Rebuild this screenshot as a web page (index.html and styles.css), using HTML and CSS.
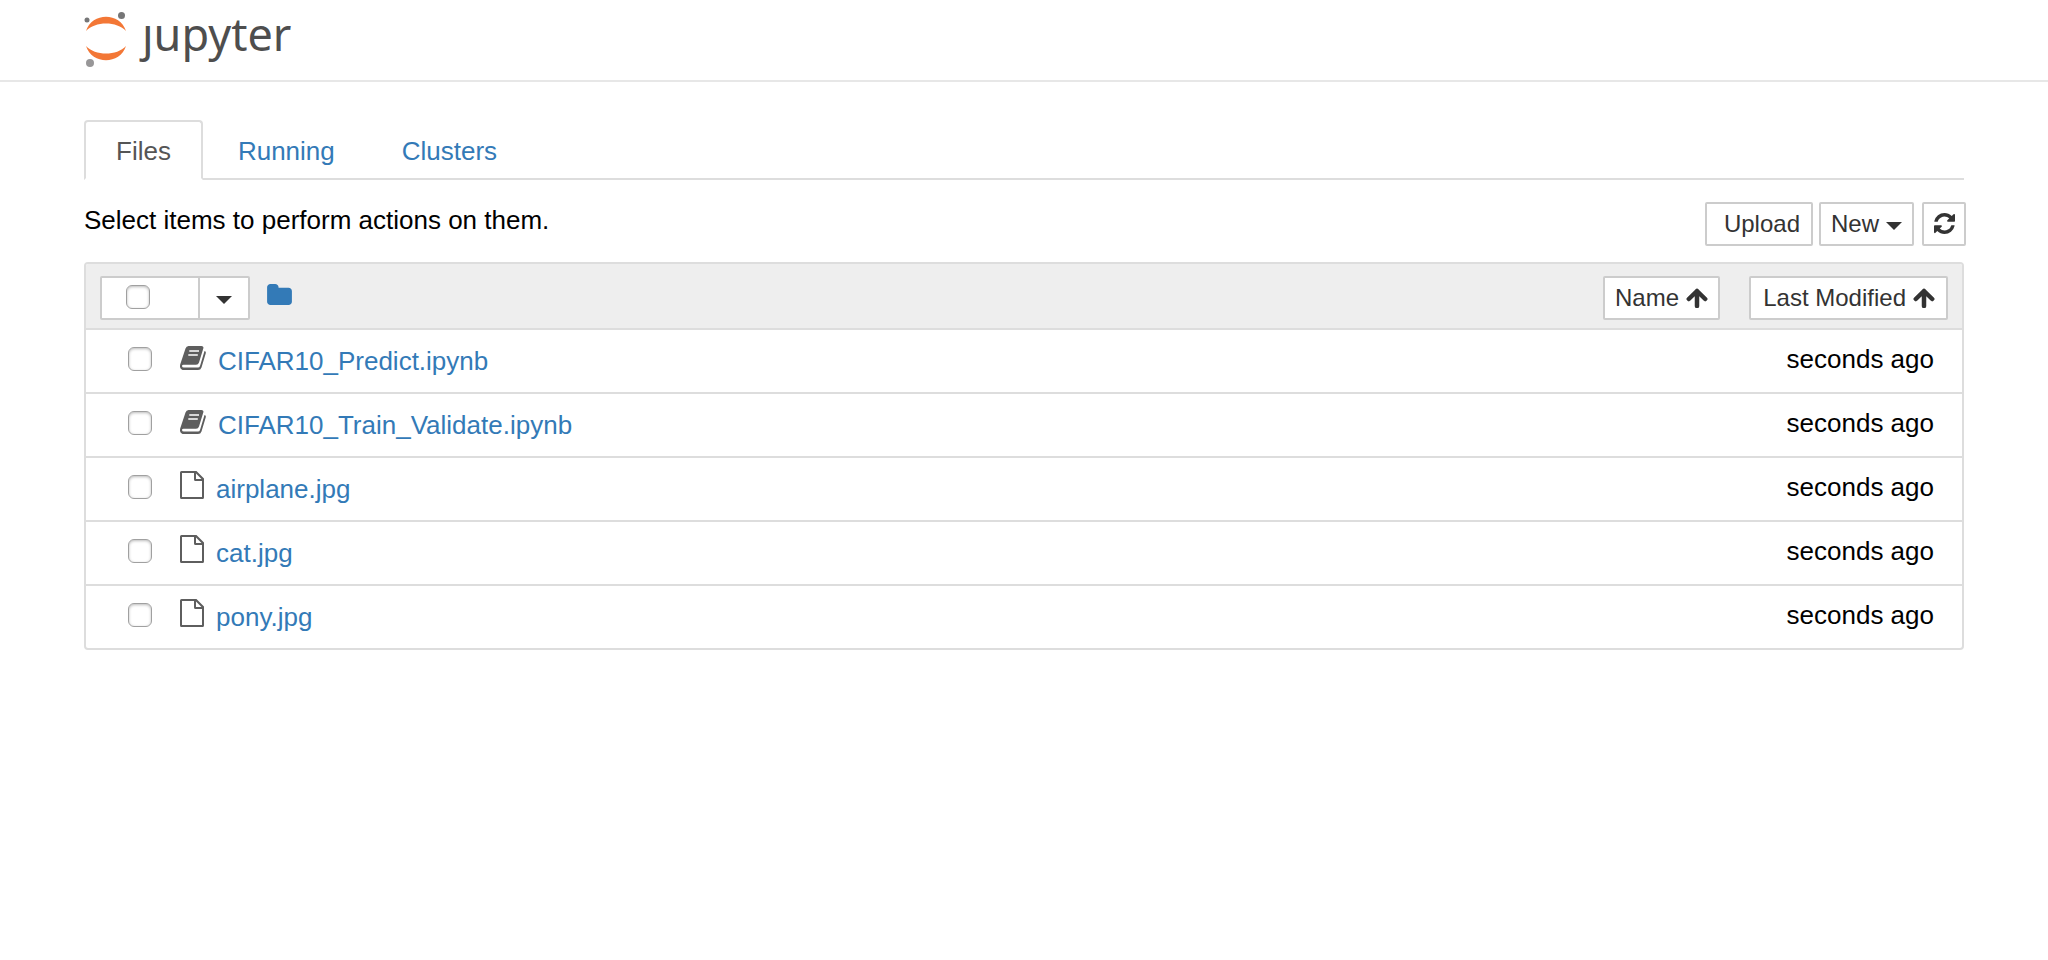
FILE: index.html
```html
<!DOCTYPE html>
<html lang="en">
<head>
  <meta charset="UTF-8">
  <meta name="viewport" content="width=device-width, initial-scale=1.0">
  <title>Home</title>
  <link rel="stylesheet" href="styles.css">
</head>
<body>
  <!-- icons used more than once -->
  <svg class="sprite" aria-hidden="true">
    <symbol id="icon-book" viewBox="0 0 26 24">
      <path d="M8.500 0H21.500Q24 0 23.300 2.500L19 16.500Q18.300 18.800 16 18.800H3.500Q2 18.800 2 20Q2 21.500 4 21.500H18Q19.500 21.500 20 20L24.500 5Q26.300 5.500 25.700 7.500L21.500 21.500Q20.700 24 18 24H4Q0.800 24 0.100 21.200Q-0.200 19.500 0.500 17.500L5.500 2.500Q6.300 0 8.500 0Z"/>
      <path d="M9.300 5H19M8.300 9H17.800" stroke="#fff" stroke-width="1.500"/>
    </symbol>
    <symbol id="icon-file" viewBox="0 0 24 28">
      <path fill-rule="evenodd" d="M1.500 0H16.500L24 7.500V26.500Q24 28 22.500 28H1.500Q0 28 0 26.500V1.500Q0 0 1.500 0ZM2 2V26H22V10H15.500Q14 10 14 8.500V2ZM16 2.500V8H21.500Z"/>
    </symbol>
    <symbol id="icon-arrow-up" viewBox="0 0 22 20">
      <path d="M11 3V18M2.800 11L11 3L19.200 11" fill="none" stroke="currentColor" stroke-width="4.500" stroke-linecap="round" stroke-linejoin="round"/>
    </symbol>
  </svg>

  <header class="header">
    <div class="container">
      <a class="logo" href="#">
        <svg class="logo-mark" viewBox="0 0 44 56" aria-hidden="true">
          <path fill="#f37736" d="M2 19C8 0 36 0 42 19C33 9 11 9 2 19Z"/>
          <path fill="#f37736" d="M2 34C11 44 33 44 42 34C36 53 8 53 2 34Z"/>
          <circle cx="37.500" cy="3.500" r="3.500" fill="#767677"/>
          <circle cx="3" cy="8" r="2.500" fill="#767677"/>
          <circle cx="6" cy="51" r="4" fill="#989798"/>
        </svg>
        <span class="logo-text">ȷupyter</span>
      </a>
    </div>
  </header>

  <main class="container">
    <nav class="tabs">
      <a class="tab active" href="#">Files</a>
      <a class="tab" href="#">Running</a>
      <a class="tab" href="#">Clusters</a>
    </nav>

    <div class="toolbar">
      <p class="hint">Select items to perform actions on them.</p>
      <div class="actions">
        <button class="btn btn-upload" type="button">Upload</button>
        <button class="btn" type="button">New <span class="caret"></span></button>
        <button class="btn btn-refresh" type="button" aria-label="Refresh">
          <svg class="icon-refresh" viewBox="0 0 1536 1536" aria-hidden="true">
            <path d="M1511 928q0 5-1 7-64 268-268 434.500t-478 166.500q-146 0-282.500-55t-243.500-157l-129 129q-19 19-45 19t-45-19-19-45v-448q0-26 19-45t45-19h448q26 0 45 19t19 45-19 45l-137 137q71 66 161 102t187 36q134 0 250-65t186-179q11-17 53-117 8-23 30-23h192q13 0 22.500 9.500t9.500 22.500zm25-800v448q0 26-19 45t-45 19h-448q-26 0-45-19t-19-45 19-45l138-138q-148-137-349-137-134 0-250 65t-186 179q-11 17-53 117-8 23-30 23h-199q-13 0-22.500-9.500t-9.500-22.500v-7q65-268 270-434.500t480-166.500q146 0 284 55.500t245 156.500l130-129q19-19 45-19t45 19 19 45z"/>
          </svg>
        </button>
      </div>
    </div>

    <table class="files">
      <thead>
        <tr>
          <th>
            <div class="list-header">
              <div class="select-group">
                <label class="select-all"><input class="check" type="checkbox" aria-label="Select all"></label>
                <button class="btn btn-menu" type="button" aria-label="Select by type"><span class="caret"></span></button>
              </div>
              <a class="home" href="#" aria-label="Home folder">
                <svg class="icon-folder" viewBox="0 0 1664 1408" aria-hidden="true">
                  <path d="M1664 480v704q0 92-66 158t-158 66h-1216q-92 0-158-66t-66-158v-960q0-92 66-158t158-66h320q92 0 158 66t66 158v32h672q92 0 158 66t66 158z"/>
                </svg>
              </a>
              <button class="btn" type="button">Name <svg class="icon-arrow" aria-hidden="true"><use href="#icon-arrow-up"/></svg></button>
            </div>
          </th>
          <th class="col-modified">
            <button class="btn btn-modified" type="button">Last Modified <svg class="icon-arrow" aria-hidden="true"><use href="#icon-arrow-up"/></svg></button>
          </th>
        </tr>
      </thead>
      <tbody>
        <tr>
          <td>
            <div class="item">
              <input class="check" type="checkbox" aria-label="CIFAR10_Predict.ipynb">
              <svg class="icon-book" aria-hidden="true"><use href="#icon-book"/></svg>
              <a class="item-link" href="#">CIFAR10_Predict.ipynb</a>
            </div>
          </td>
          <td class="modified">seconds ago</td>
        </tr>
        <tr>
          <td>
            <div class="item">
              <input class="check" type="checkbox" aria-label="CIFAR10_Train_Validate.ipynb">
              <svg class="icon-book" aria-hidden="true"><use href="#icon-book"/></svg>
              <a class="item-link" href="#">CIFAR10_Train_Validate.ipynb</a>
            </div>
          </td>
          <td class="modified">seconds ago</td>
        </tr>
        <tr>
          <td>
            <div class="item">
              <input class="check" type="checkbox" aria-label="airplane.jpg">
              <svg class="icon-file" aria-hidden="true"><use href="#icon-file"/></svg>
              <a class="item-link" href="#">airplane.jpg</a>
            </div>
          </td>
          <td class="modified">seconds ago</td>
        </tr>
        <tr>
          <td>
            <div class="item">
              <input class="check" type="checkbox" aria-label="cat.jpg">
              <svg class="icon-file" aria-hidden="true"><use href="#icon-file"/></svg>
              <a class="item-link" href="#">cat.jpg</a>
            </div>
          </td>
          <td class="modified">seconds ago</td>
        </tr>
        <tr>
          <td>
            <div class="item">
              <input class="check" type="checkbox" aria-label="pony.jpg">
              <svg class="icon-file" aria-hidden="true"><use href="#icon-file"/></svg>
              <a class="item-link" href="#">pony.jpg</a>
            </div>
          </td>
          <td class="modified">seconds ago</td>
        </tr>
      </tbody>
    </table>
  </main>
</body>
</html>
```
FILE: styles.css
```css
* {
  box-sizing: border-box;
}
body {
  margin: 0;
  font-family: "Liberation Sans", Arial, sans-serif;
  font-size: 26px;
  line-height: 36px;
  color: #000;
  background: #fff;
}
a {
  color: #337ab7;
  text-decoration: none;
}
.sprite {
  display: none;
}
.container {
  padding: 0 84px;
}

/* header */
.header {
  border-bottom: 2px solid #e7e7e7;
}
.logo {
  display: flex;
  gap: 14px;
  height: 80px;
  padding-top: 12px;
}
.logo-mark {
  width: 44px;
  height: 56px;
}
.logo-text {
  font-family: "Noto Sans", sans-serif;
  font-size: 45px;
  line-height: 44px;
  color: #4e4e4e;
}

/* tabs */
.tabs {
  display: flex;
  gap: 3px;
  margin-top: 38px;
  border-bottom: 2px solid #ddd;
}
.tab {
  padding: 11px 30px 9px;
  margin-bottom: -2px;
  border: 2px solid transparent;
  border-radius: 4px 4px 0 0;
}
.tab.active {
  color: #555;
  background: #fff;
  border-color: #ddd #ddd #fff;
}

/* toolbar */
.toolbar {
  display: flex;
  justify-content: space-between;
  margin: 22px -2px 16px 0;
}
.hint {
  margin: 0;
}
.actions {
  display: flex;
  gap: 6px;
}
.btn {
  display: inline-flex;
  align-items: center;
  justify-content: center;
  gap: 7px;
  height: 44px;
  padding: 0 10px;
  font-family: inherit;
  font-size: 24px;
  line-height: 36px;
  color: #333;
  background: #fff;
  border: 2px solid #ccc;
  border-radius: 2px;
  cursor: pointer;
}
.btn-upload {
  padding: 0 11px 0 17px;
}
.btn-refresh {
  width: 44px;
  padding: 0;
  margin-left: 2px;
}
.btn-modified {
  padding: 0 11px 0 12px;
}
.caret {
  border-top: 8px solid #333;
  border-left: 8px solid transparent;
  border-right: 8px solid transparent;
  margin-top: 4px;
}
.icon-refresh {
  width: 21px;
  height: 21px;
  margin-bottom: 2px;
  fill: #333;
}
.icon-arrow {
  width: 22px;
  height: 20px;
}

/* file list */
.files {
  width: 100%;
  border: 2px solid #ddd;
  border-radius: 4px;
  border-spacing: 0;
  overflow: hidden;
}
.files th,
.files td {
  height: 64px;
  padding: 0;
  font-weight: normal;
  text-align: left;
  border-bottom: 2px solid #ddd;
}
.files th {
  height: 66px;
  padding-top: 4px;
  background: #eee;
}
.files tbody tr:last-child td {
  height: 62px;
  border-bottom: none;
}
.list-header {
  display: flex;
  align-items: center;
  padding-left: 14px;
}
.select-group {
  display: flex;
}
.select-all {
  display: flex;
  align-items: center;
  width: 100px;
  height: 44px;
  padding: 0 0 2px 24px;
  background: #fff;
  border: 2px solid #ccc;
  border-radius: 2px 0 0 2px;
}
.btn-menu {
  width: 52px;
  margin-left: -2px;
  border-radius: 0 2px 2px 0;
}
.home {
  display: flex;
  margin: 0 auto 8px 17px;
}
.icon-folder {
  width: 25px;
  height: 21px;
  fill: #337ab7;
}
.files .col-modified {
  width: 242px;
  padding-right: 14px;
  text-align: right;
}
.col-modified .btn {
  vertical-align: middle;
}
.check {
  appearance: none;
  width: 24px;
  height: 24px;
  margin: 0;
  border: 1px solid #a0a0a0;
  border-radius: 6px;
  background: #fff;
  box-shadow: inset 0 1px 3px #bbb;
}
.item {
  display: flex;
  align-items: center;
  padding-left: 42px;
}
.item .check {
  margin: 0 28px 4px 0;
}
.icon-book,
.icon-file {
  width: 26px;
  height: 24px;
  margin: 0 12px 6px 0;
  fill: #5e5e5e;
}
.icon-file {
  width: 24px;
  height: 28px;
  margin-bottom: 8px;
}
.files .modified {
  padding: 0 28px 4px 0;
  text-align: right;
}
```
